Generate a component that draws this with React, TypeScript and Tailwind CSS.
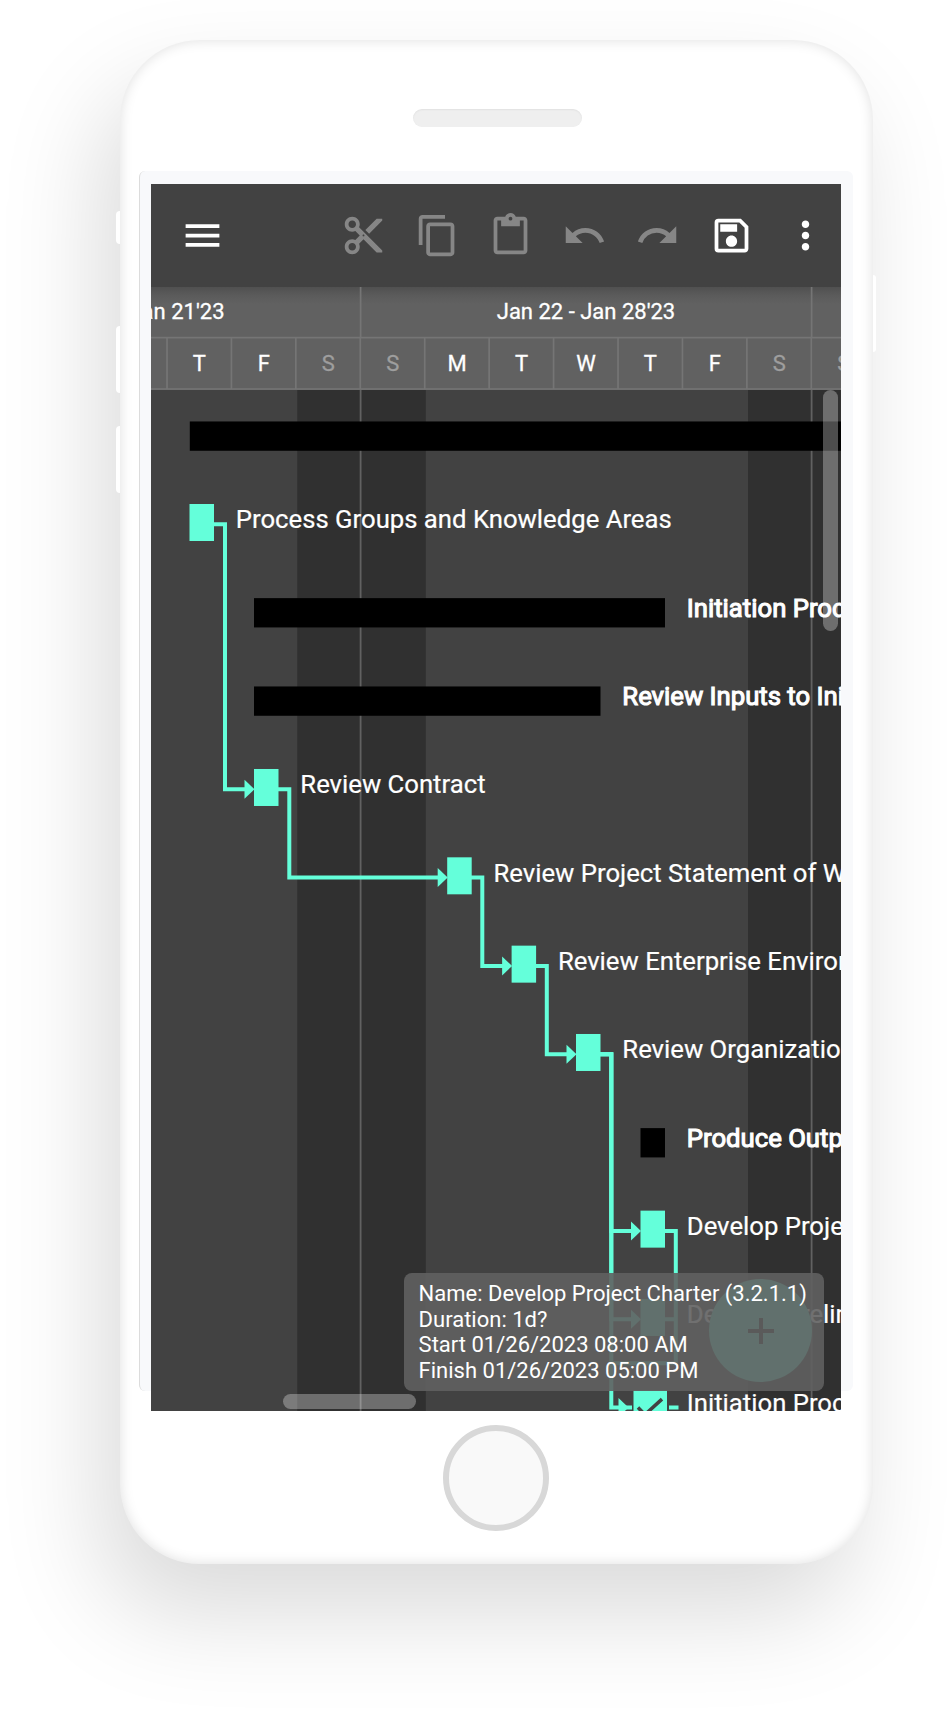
import { MdMenu, MdContentCut, MdContentCopy, MdContentPaste, MdUndo, MdRedo, MdOutlineSave, MdMoreVert } from "react-icons/md";

const TEAL = "#64ffda";
const PITCH = 88.33;
const COL = 64.43;

type Task = { label?: string; x: number; w: number; summary?: boolean; check?: boolean };

const tasks: Task[] = [
  { x: 38.8, w: 700, summary: true },
  { label: "Process Groups and Knowledge Areas", x: 38.5, w: 24.5 },
  { label: "Initiation Process Group", x: 103, w: 411, summary: true },
  { label: "Review Inputs to Initiation", x: 103, w: 346.5, summary: true },
  { label: "Review Contract", x: 103, w: 24.5 },
  { label: "Review Project Statement of Work", x: 296.2, w: 24.5 },
  { label: "Review Enterprise Environment", x: 360.6, w: 24.5 },
  { label: "Review Organizational Process", x: 425, w: 24.5 },
  { label: "Produce Outputs", x: 489.5, w: 24.5, summary: true },
  { label: "Develop Project Charter", x: 489.5, w: 24.5 },
  { label: "Develop Preliminary", x: 489.5, w: 24.5 },
  { label: "Initiation Process Complete", x: 489.5, w: 24.5, check: true },
];

const lineY = (row: number) => 134.3 + (row - 1) * PITCH;
const columns = Array.from({ length: 11 }, (_, i) => 16 + i * COL);
const days = ["T", "F", "S", "S", "M", "T", "W", "T", "F", "S", "S"];

function Arrow({ x, y }: { x: number; y: number }) {
  return <path d={`M${x - 9.5} ${y - 9.5}L${x + 0.5} ${y}L${x - 9.5} ${y + 9.5}Z`} fill={TEAL} />;
}

function Link({ from, to, x, end }: { from: number; to: number; x: number; end: number }) {
  return (
    <g>
      <path d={`M${x - 13} ${lineY(from)}H${x}V${lineY(to)}H${end - 5}`} fill="none" stroke={TEAL} strokeWidth="4" />
      <Arrow x={end} y={lineY(to)} />
    </g>
  );
}

function Chart() {
  return (
    <svg width="690" height="1021" viewBox="0 0 690 1021" className="block font-['Roboto',sans-serif]">
      <rect width="690" height="1021" fill="#424242" />
      <rect x="146.3" width="128.5" height="1021" fill="#303030" />
      <rect x="597" width="93" height="1021" fill="#303030" />
      <path d="M209.6 0V1021M660.6 0V1021" stroke="#616161" strokeWidth="1.8" />
      <Link from={1} to={4} x={74} end={103} />
      <Link from={4} to={5} x={138.3} end={296.2} />
      <Link from={5} to={6} x={331.3} end={360.6} />
      <Link from={6} to={7} x={395.8} end={425} />
      <Link from={7} to={9} x={460.3} end={489.5} />
      <Link from={7} to={10} x={460.3} end={489.5} />
      <Link from={7} to={11} x={460.3} end={477} />
      <path
        d={`M514 ${lineY(9)}H524.8V${lineY(10) + 44}H460.3M514 ${lineY(10)}H524.8M518 ${lineY(11)}H527.5M472 ${lineY(11)}H481`}
        fill="none"
        stroke={TEAL}
        strokeWidth="4"
      />
      {tasks.map((t, i) => {
        const y = lineY(i);
        return (
          <g key={i}>
            {t.check ? (
              <g>
                <rect x="482.5" y={y - 17} width="33.5" height="34" fill={TEAL} />
                <path d={`M487 ${y}l7 7L511 ${y - 8.5}`} fill="none" stroke="#424242" strokeWidth="3.5" />
              </g>
            ) : t.summary ? (
              <rect x={t.x} y={y - 14.5} width={t.w} height="29.3" fill="#000" />
            ) : (
              <rect x={t.x} y={y - 20.3} width={t.w} height="37" fill={TEAL} />
            )}
            {t.label && (
              <text
                x={t.x + t.w + 21.8}
                y={y + 3.9}
                fill="#fff"
                fontSize="25.7"
                stroke="#fff"
                strokeWidth={t.summary ? 1.1 : 0.2}
              >
                {t.label}
              </text>
            )}
          </g>
        );
      })}
    </svg>
  );
}

function Timeline() {
  return (
    <div className="h-[103px] w-full overflow-hidden bg-[#616161]">
      <svg width="690" height="103" className="block font-['Roboto',sans-serif]" fontSize="22">
        <defs>
          <linearGradient id="shade" x2="0" y2="1">
            <stop offset="0" stopColor="#505050" />
            <stop offset="0.5" stopColor="#5b5b5b" />
            <stop offset="1" stopColor="#616161" />
          </linearGradient>
        </defs>
        <rect width="690" height="17" fill="url(#shade)" />
        <path d="M0 50.7H690M0 102H690M209.6 0V50M660.6 0V50" stroke="#757575" strokeWidth="1.7" />
        <g stroke="#fff" strokeWidth="0.3" fill="#fff">
          <text x="73.5" y="32.4" textAnchor="end">Jan 15 - Jan 21'23</text>
          <text x="435" y="32.4" textAnchor="middle">Jan 22 - Jan 28'23</text>
        </g>
        {columns.map((x, i) => {
          const color = days[i] === "S" ? "#9e9e9e" : "#fff";
          return (
            <g key={i}>
              <path d={`M${x} 51V102`} stroke="#757575" strokeWidth="1.7" />
              <text x={x + 32.4} y="83.7" textAnchor="middle" fill={color} stroke={color} strokeWidth="0.3">{days[i]}</text>
            </g>
          );
        })}
      </svg>
    </div>
  );
}

function Toolbar() {
  return (
    <div className="flex h-[103px] items-center justify-between bg-[#424242] pr-[13.5px] pl-[29px] text-[#868686]">
      <MdMenu className="size-[45px] text-white" />
      <div className="flex gap-[28.6px]">
        <MdContentCut className="size-[45px]" />
        <MdContentCopy className="size-[45px]" />
        <MdContentPaste className="size-[45px]" />
        <MdUndo className="size-[45px]" />
        <MdRedo className="size-[45px]" />
        <MdOutlineSave className="size-[45px] text-white" />
        <MdMoreVert className="size-[45px] text-white" />
      </div>
    </div>
  );
}

export default function App() {
  return (
    <div className="h-[1724px] w-[952px] overflow-hidden bg-white pt-10 pl-[119.5px] font-['Roboto',sans-serif]">
      <div className="relative h-[1523.5px] w-[753px] rounded-[80px] bg-white shadow-[-20px_50px_100px_rgba(0,0,0,0.145),inset_0_0_13px_rgba(0,0,0,0.13)]">
        <div className="absolute top-[171px] -left-[3.5px] h-[33px] w-[3.5px] rounded-l-sm bg-white" />
        <div className="absolute top-[286px] -left-[3.5px] h-[67px] w-[3.5px] rounded-l-sm bg-white" />
        <div className="absolute top-[386px] -left-[3.5px] h-[67px] w-[3.5px] rounded-l-sm bg-white" />
        <div className="absolute top-[235px] -right-[3.5px] h-[77px] w-[3.5px] rounded-r-sm bg-white" />
        <div className="flex h-[130.5px] justify-center pt-[69px] pl-[2px]">
          <div className="h-[18px] w-[169px] rounded-full bg-[#efefef] shadow-[inset_0_1px_2px_rgba(0,0,0,0.06)]" />
        </div>
        <div className="ml-[19.5px] h-[1220px] w-[714px] rounded-md border-l border-[#dcdcdc] bg-[#f8f9fb] pt-[13.5px] pl-[11px]">
          <div className="relative h-[1227px] w-[690px] overflow-hidden">
            <Toolbar />
            <Timeline />
            <Chart />
            <div className="absolute top-[206px] right-[3px] h-[241px] w-[15px] rounded-full bg-white/30" />
            <div className="absolute bottom-[2.5px] left-[132px] h-[15px] w-[133px] rounded-full bg-white/30" />
            <div className="absolute top-[1095px] left-[558px] flex size-[103px] items-center justify-center rounded-full bg-[#64ffda]">
              <svg width="26" height="26" viewBox="0 0 26 26"><path d="M13 0V26M0 13H26" stroke="#202020" strokeWidth="4" /></svg>
            </div>
            <div className="absolute top-[1089px] left-[252.6px] h-[118px] w-[420px] rounded-lg bg-[#616161]/90 pt-[8px] pl-[15px] text-[22px] leading-[25.7px] whitespace-nowrap text-white">
              <div>Name: Develop Project Charter (3.2.1.1)</div>
              <div>Duration: 1d?</div>
              <div>Start 01/26/2023 08:00 AM</div>
              <div>Finish 01/26/2023 05:00 PM</div>
            </div>
          </div>
        </div>
        <div className="flex justify-center pt-[34.5px]">
          <div className="size-[106px] rounded-full border-[6.5px] border-[#d8d8d8] bg-[#f9f9f9]" />
        </div>
      </div>
    </div>
  );
}
